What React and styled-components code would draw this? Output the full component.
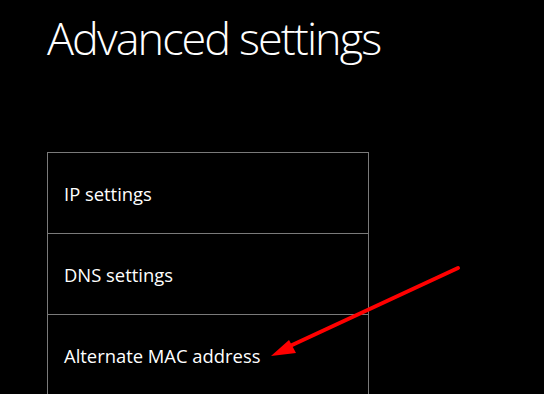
import React from 'react';
import styled, { createGlobalStyle } from 'styled-components';

const GlobalStyle = createGlobalStyle`
  html, body {
    margin: 0;
    padding: 0;
    background: #000;
    overflow: hidden;
  }
  body {
    font-family: 'Open Sans', 'Noto Sans', sans-serif;
    color: #fff;
  }
`;

const Page = styled.div`
  position: relative;
  width: 544px;
  height: 394px;
  padding: 0 0 0 47px;
  box-sizing: border-box;
  background: #000;
  overflow: hidden;
`;

const Title = styled.h1`
  margin: 0;
  padding-top: 10px;
  font-size: 45px;
  font-weight: 300;
  line-height: 56px;
  letter-spacing: -1.95px;
  color: #fff;
`;

const List = styled.div`
  margin-top: 86px;
  width: 322px;
  border: 1px solid #7a7a7a;
  border-bottom: none;
  box-sizing: border-box;
`;

const Row = styled.div`
  display: flex;
  align-items: center;
  height: 81px;
  padding-left: 16px;
  box-sizing: border-box;
  border-bottom: ${({ $last }) => ($last ? 'none' : '1px solid #7a7a7a')};
  font-size: 18.4px;
  color: #fff;
`;

const Arrow = styled.svg`
  position: absolute;
  left: 0;
  top: 0;
  pointer-events: none;
`;

const items = ['IP settings', 'DNS settings', 'Alternate MAC address'];

export default function App() {
  return (
    <>
      <GlobalStyle />
      <Page>
        <Title>Advanced settings</Title>
        <List>
          {items.map((label, i) => (
            <Row key={label} $last={i === items.length - 1}>
              {label}
            </Row>
          ))}
        </List>
        <Arrow width="544" height="394" viewBox="0 0 544 394">
          <line x1="458" y1="268" x2="290" y2="346" stroke="#ff0000" strokeWidth="4" strokeLinecap="round" />
          <polygon points="271,356 289,340 296,353" fill="#ff0000" />
        </Arrow>
      </Page>
    </>
  );
}
